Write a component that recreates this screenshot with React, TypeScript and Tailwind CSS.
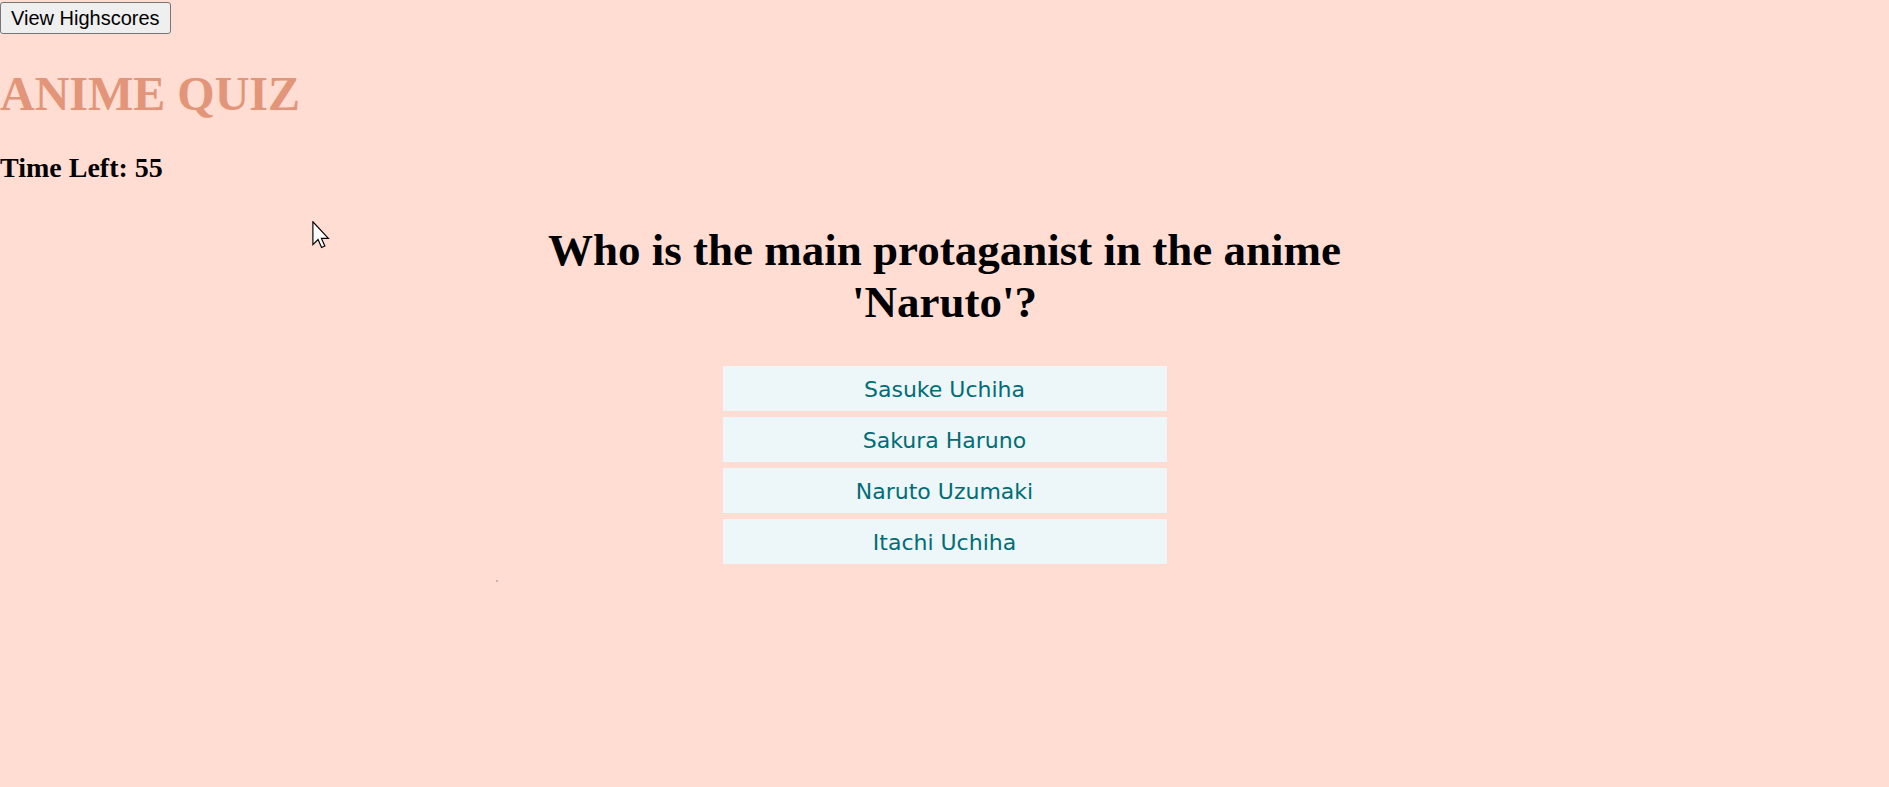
import React from "react";

const answers = ["Sasuke Uchiha", "Sakura Haruno", "Naruto Uzumaki", "Itachi Uchiha"];

export default function App() {
  return (
    <div className="relative min-h-[787px] w-full bg-[#ffddd2] font-['Liberation_Serif',serif] text-black">
      <div className="pt-[2px]">
        <button className="h-[32px] rounded-[3px] border border-[#767676] bg-[#efefef] px-[10px] font-['Liberation_Sans',Arial,sans-serif] text-[20px] leading-[23px] text-black">
          View Highscores
        </button>
      </div>
      <h1 className="mt-[33px] text-[48px] font-bold leading-[53px] text-[#e29578]">ANIME QUIZ</h1>
      <h3 className="mt-[32px] text-[28px] font-bold leading-[31px]">Time Left: 55</h3>
      <div className="mx-auto mt-[41px] w-1/2 text-center">
        <h2 className="text-[45px] font-bold leading-[52px]">
          Who is the main protaganist in the anime 'Naruto'?
        </h2>
      </div>
      <div className="mx-auto mt-[38px] flex w-[444px] flex-col gap-[6px]">
        {answers.map((a) => (
          <button
            key={a}
            className="flex h-[45px] w-full items-center justify-center bg-[#edf6f9] pt-[2px] font-['DejaVu_Sans',Verdana,sans-serif] text-[22px] text-[#006d77]"
          >
            {a}
          </button>
        ))}
      </div>
      <div className="absolute left-[496px] top-[580px] h-[2px] w-[2px] bg-[#a09a98] opacity-60" />
      <svg
        className="absolute left-[312px] top-[221px]"
        width="18"
        height="28"
        viewBox="0 0 12 19"
      >
        <path
          d="M0.5 0.5 L0.5 16 L4 12.6 L6.4 18 L8.6 17 L6.3 11.8 L11 11.8 Z"
          fill="#ffffff"
          stroke="#000000"
          strokeWidth="0.8"
          strokeLinejoin="miter"
        />
      </svg>
    </div>
  );
}
